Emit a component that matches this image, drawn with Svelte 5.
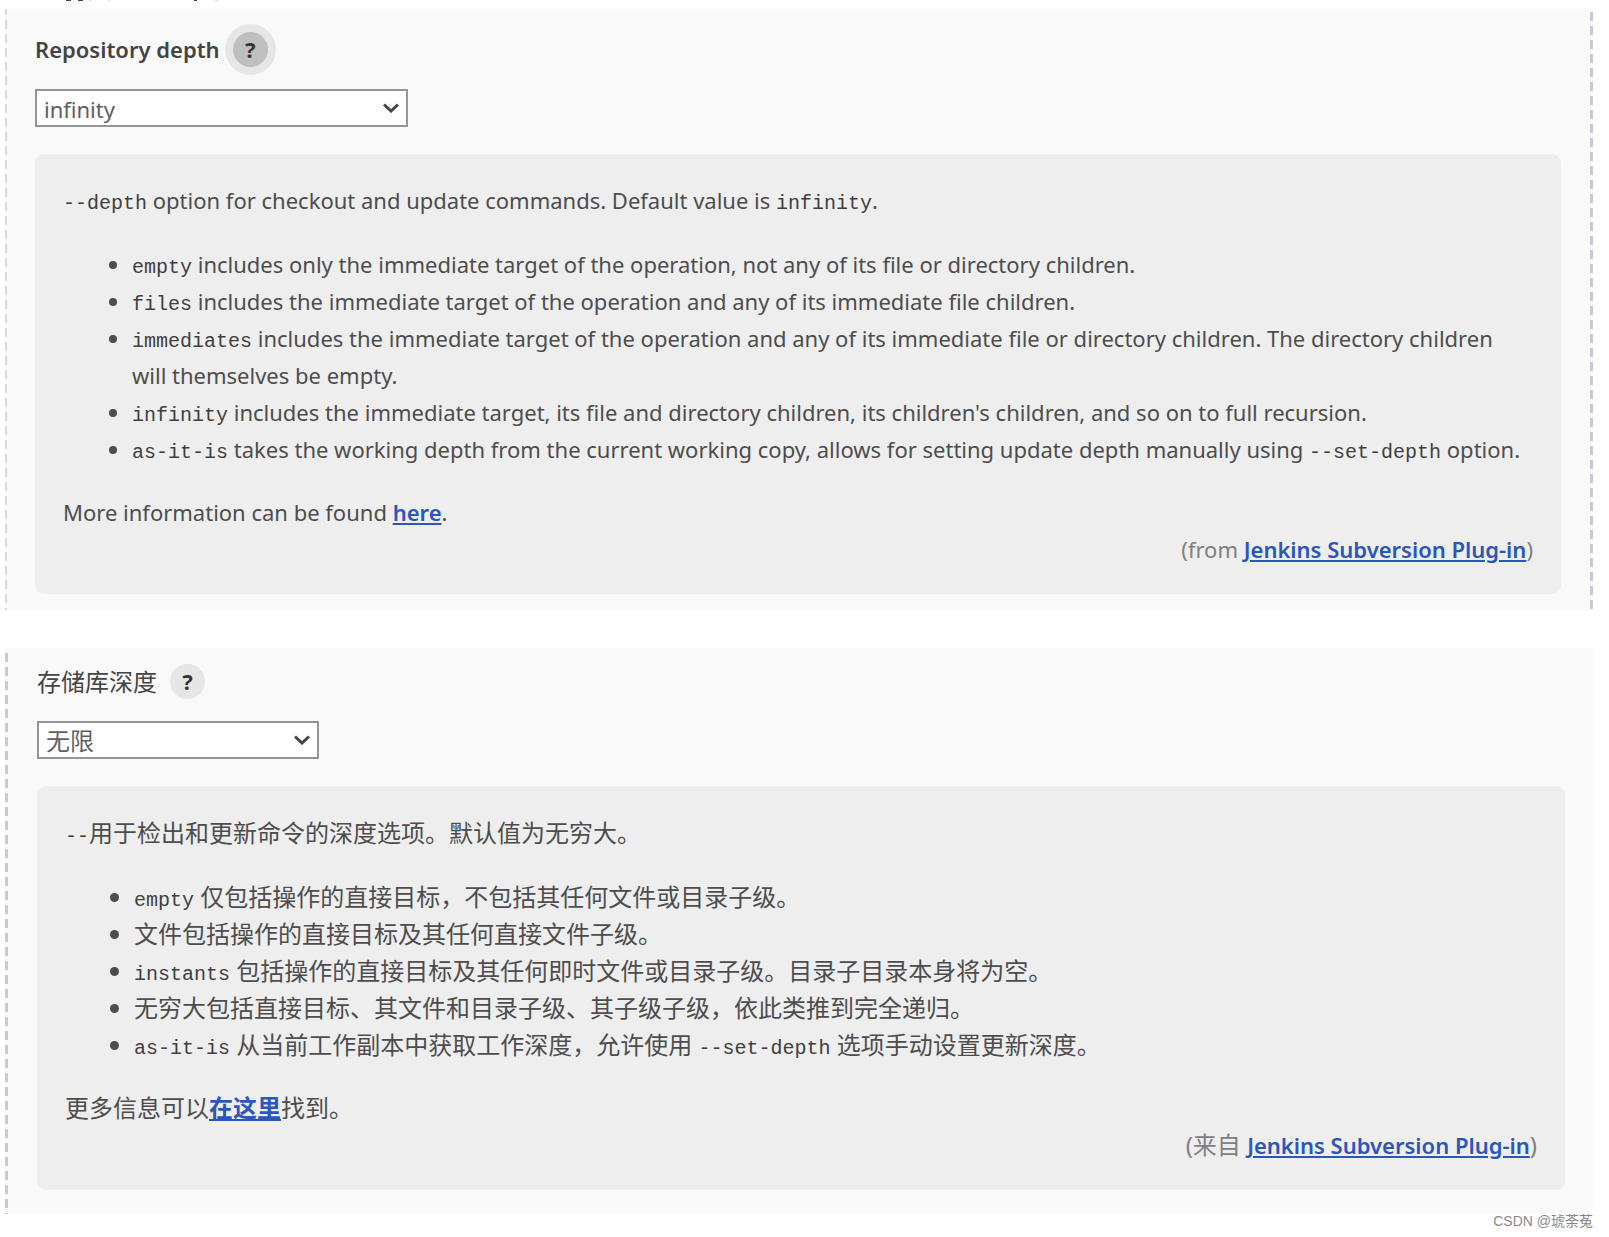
<script>
    const options = ['empty', 'files', 'immediates', 'infinity', 'as-it-is'];
    const optionsZh = ['无限', '空', '文件', '即时', '按原样'];

    let depth = 'infinity';
    let depthZh = '无限';
    let helpOpen = true;
    let helpZhOpen = true;
</script>

<main>
    <svg class="cutoff" viewBox="0 0 180 2" aria-hidden="true">
        <path d="M16 0h5v1h-5zM28 0h5v1h-5zM144 0h3v1h-3z" fill="#444" />
        <path d="M58 0h2v1h-2zM39 0h2v1h-2zM165 0h3v1h-3z" fill="#ddd" />
    </svg>

    <section class="panel both">
        <div class="heading">
            <label for="depth">Repository depth</label>
            <button class="help-button active" type="button" aria-label="Help" on:click={() => helpOpen = !helpOpen}>?</button>
        </div>
        <div class="select wide">
            <select id="depth" bind:value={depth}>
                {#each options as option}
                    <option value={option}>{option}</option>
                {/each}
            </select>
            <svg viewBox="0 0 16 10" aria-hidden="true"><path d="M1 1.5 8 8l7-6.5" /></svg>
        </div>
        {#if helpOpen}
            <div class="help">
                <p><code>--depth</code> option for checkout and update commands. Default value is <code>infinity</code>.</p>
                <ul>
                    <li><code>empty</code> includes only the immediate target of the operation, not any of its file or directory children.</li>
                    <li><code>files</code> includes the immediate target of the operation and any of its immediate file children.</li>
                    <li><code>immediates</code> includes the immediate target of the operation and any of its immediate file or directory children. The directory children will themselves be empty.</li>
                    <li><code>infinity</code> includes the immediate target, its file and directory children, its children's children, and so on to full recursion.</li>
                    <li><code>as-it-is</code> takes the working depth from the current working copy, allows for setting update depth manually using <code>--set-depth</code> option.</li>
                </ul>
                <p>More information can be found <a href="#here">here</a>.</p>
                <p class="from">(from <a href="#plugin">Jenkins Subversion Plug-in</a>)</p>
            </div>
        {/if}
    </section>

    <section class="panel zh" lang="zh-CN">
        <div class="heading">
            <label for="depth-zh">存储库深度</label>
            <button class="help-button" type="button" aria-label="帮助" on:click={() => helpZhOpen = !helpZhOpen}>?</button>
        </div>
        <div class="select">
            <select id="depth-zh" bind:value={depthZh}>
                {#each optionsZh as option}
                    <option value={option}>{option}</option>
                {/each}
            </select>
            <svg viewBox="0 0 16 10" aria-hidden="true"><path d="M1 1.5 8 8l7-6.5" /></svg>
        </div>
        {#if helpZhOpen}
            <div class="help">
                <p><code>--</code>用于检出和更新命令的深度选项。默认值为无穷大。</p>
                <ul>
                    <li><code>empty</code> 仅包括操作的直接目标，不包括其任何文件或目录子级。</li>
                    <li>文件包括操作的直接目标及其任何直接文件子级。</li>
                    <li><code>instants</code> 包括操作的直接目标及其任何即时文件或目录子级。目录子目录本身将为空。</li>
                    <li>无穷大包括直接目标、其文件和目录子级、其子级子级，依此类推到完全递归。</li>
                    <li><code>as-it-is</code> 从当前工作副本中获取工作深度，允许使用 <code>--set-depth</code> 选项手动设置更新深度。</li>
                </ul>
                <p>更多信息可以<a href="#here-zh">在这里</a>找到。</p>
                <p class="from">(来自 <a class="latin" href="#plugin-zh">Jenkins Subversion Plug-in</a>)</p>
            </div>
        {/if}
    </section>

    <footer>CSDN @琥荼菟</footer>
</main>

<style>
    :global(body) {
        margin: 0;
        background: #fff;
    }

    main {
        padding: 0 16px 0 5px;
        color: #4d4d4d;
        font-family: "Noto Sans", "Noto Sans CJK SC", sans-serif;
        font-size: 22px;
        line-height: 37px;
    }

    .cutoff {
        display: block;
        width: 180px;
        height: 2px;
        margin: 0 0 7px 45px;
    }

    /* 9px dashes with 5px between them down the side of the panel */
    .panel {
        padding: 14px 32px 16px 30px;
        background: repeating-linear-gradient(#f9f9f9 0 5px, #c3ccd2 5px 14px) left top / 3px 100% no-repeat #f9f9f9;
    }

    .both {
        background:
            repeating-linear-gradient(#d3dade 0 6px, #f9f9f9 6px 11px, #d3dade 11px 14px) left top / 2px 100% no-repeat,
            repeating-linear-gradient(#f9f9f9 0 3px, #c3ccd2 3px 12px, #f9f9f9 12px 14px) right top / 3px 100% no-repeat,
            #f9f9f9;
    }

    .zh {
        margin-top: 38px;
        padding: 7px 28px 24px 32px;
        font-size: 24px;
    }

    .heading {
        display: flex;
        align-items: center;
        gap: 13px;
        height: 52px;
    }

    label {
        color: #444;
        font-weight: 600;
    }

    .zh label {
        font-weight: 400;
    }

    .help-button {
        width: 35px;
        height: 35px;
        padding: 0;
        border: 0;
        border-radius: 50%;
        background: #e6e6e6;
        color: #333;
        font: 700 22px/35px "Noto Sans", sans-serif;
        cursor: pointer;
    }

    .help-button.active {
        background: #bfbfbf;
        box-shadow: 0 0 0 8px #e6e6e6;
    }

    .select {
        position: relative;
        width: 282px;
        margin: 14px 0 27px;
    }

    .wide {
        width: 373px;
    }

    select {
        display: block;
        box-sizing: border-box;
        width: 100%;
        height: 38px;
        padding: 2px 32px 0 7px;
        border: 2px solid #959595;
        border-radius: 0;
        background: #fff;
        color: #606060;
        font: inherit;
        line-height: 32px;
        appearance: none;
    }

    .select svg {
        position: absolute;
        top: 14px;
        right: 9px;
        width: 16px;
        height: 10px;
        pointer-events: none;
    }

    .select path {
        fill: none;
        stroke: #444;
        stroke-width: 3;
    }

    .help {
        padding: 28px 28px 26px;
        border-radius: 9px;
        background: #eee;
    }

    p {
        margin: 0;
    }

    ul {
        margin: 27px 0 26px;
        padding: 0 7px 0 69px;
    }

    code {
        color: #404040;
        font-family: "Liberation Mono", monospace;
        font-size: 20px;
        line-height: 20px;
    }

    a {
        color: #2b56c0;
        font-weight: 600;
        text-decoration: underline;
    }

    .from {
        color: #808080;
        text-align: right;
    }

    .latin {
        font-size: 22px;
    }

    footer {
        color: #888;
        font-family: "Liberation Sans", "Noto Sans CJK SC", sans-serif;
        font-size: 14px;
        line-height: 14px;
        text-align: right;
    }
</style>
